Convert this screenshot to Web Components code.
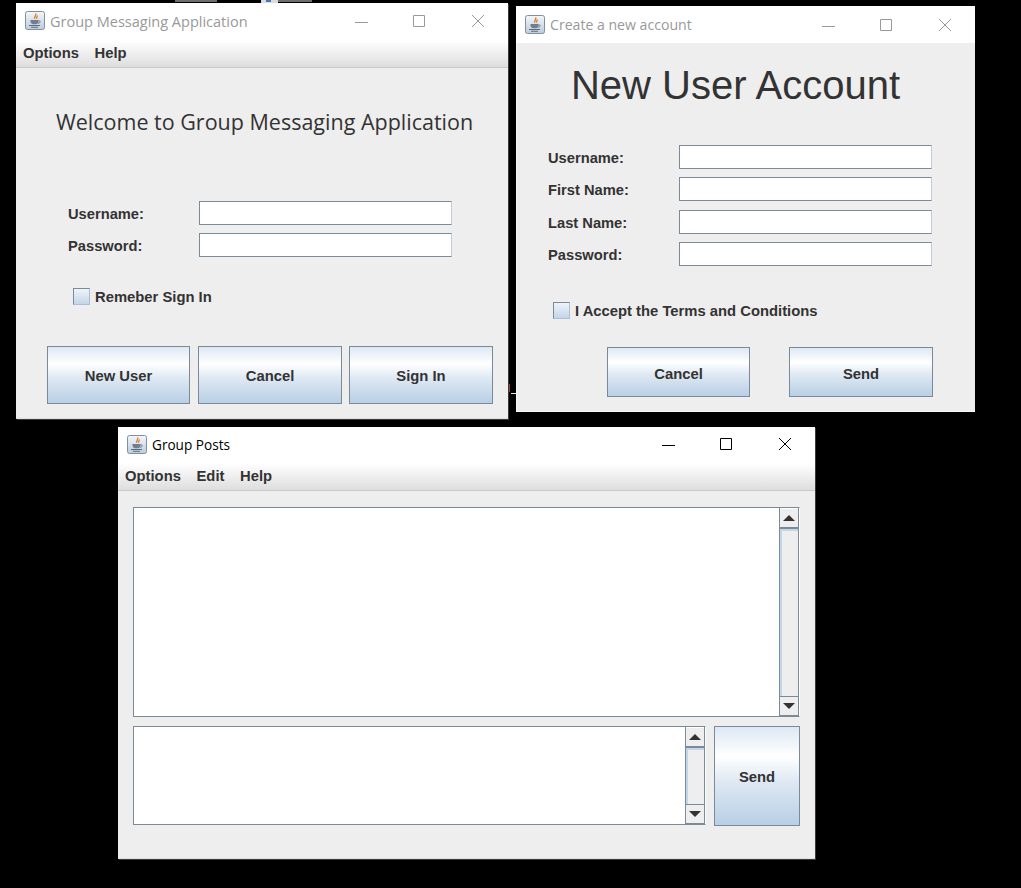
<!DOCTYPE html>
<html>
<head>
<meta charset="utf-8">
<title>Group Messaging Application</title>
<style>
html, body { margin: 0; height: 100%; background: #000; overflow: hidden; }
</style>
</head>
<body>
<desktop-scraps></desktop-scraps>

<app-window caption="Group Messaging Application" inactive style="left:16px;top:3px;width:492px;height:416px;--title-h:35px;--cap-size:14.500px;--cap-pad:1px;--edge:inset 0 -1px 0 #dfdfdf, 1px 1px 0 #3a3a3a">
    <menu-bar slot="menu"><span>Options</span><span>Help</span></menu-bar>
    <login-form></login-form>
</app-window>

<app-window caption="Create a new account" inactive style="left:516px;top:6px;width:459px;height:406px;--title-h:37px;--cap-size:14.100px;--cap-pad:0px;--edge:inset 1px -1px 0 #f8f8f8">
    <account-form></account-form>
</app-window>

<app-window caption="Group Posts" style="left:118px;top:427px;width:697px;height:432px;--title-h:34px;--cap-size:13.600px;--cap-pad:1px;--edge:inset 0 -1px 0 #dfdfdf, 1px 1px 0 #3a3a3a">
    <menu-bar slot="menu"><span>Options</span><span>Edit</span><span>Help</span></menu-bar>
    <posts-view></posts-view>
</app-window>

<script>
/* Scraps of whatever sits behind the three windows */
class DesktopScraps extends HTMLElement {
    constructor() {
        super();
        this.attachShadow({mode: "open"}).innerHTML = `
            <style>
            :host { display: block; }
            i { position: absolute; display: block; }
            </style>
            <i style="left:175px;top:0;width:42px;height:2px;background:#6e6e6e"></i>
            <i style="left:261px;top:0;width:17px;height:3px;background:#dcdcdc"></i>
            <i style="left:266px;top:0;width:5px;height:2px;background:#4a78b0"></i>
            <i style="left:278px;top:0;width:34px;height:2px;background:#6e6e6e"></i>
            <i style="left:508px;top:384px;width:1px;height:8px;background:#8fb4d8"></i>
            <i style="left:509px;top:384px;width:1px;height:8px;background:#a03c28"></i>
            <i style="left:511px;top:393px;width:5px;height:1px;background:#e8e8e8"></i>
        `;
    }
}
customElements.define("desktop-scraps", DesktopScraps);

/* The little Java coffee cup shown in every title bar */
const javaIcon = `
    <svg width="20" height="19" viewBox="0 0 20 19">
        <defs><linearGradient id="g" x1="0" y1="0" x2="0" y2="1">
            <stop offset="0" stop-color="#f4f7fa"/><stop offset="1" stop-color="#bccbdb"/>
        </linearGradient></defs>
        <rect x=".5" y=".5" width="19" height="18" rx="2" fill="url(#g)" stroke="#7f90a3"/>
        <path d="M10.500 2.500c1.500 1.800-1.800 3 -.8 5.200M12 4.500c.8 1.200-1 2-.3 3.200" fill="none" stroke="#e2812c" stroke-width="1.400"/>
        <path d="M5.500 9h8v1.200c0 2-1.500 3-2.500 3H8c-1 0-2.500-1-2.500-3z" fill="#6f7f90"/>
        <path d="M13.500 10h1.300c.8 0 .8 2-1.800 2.300" fill="none" stroke="#6f7f90"/>
        <path d="M4 14.500h11M6 16.300h7" stroke="#5d6d80" stroke-width="1.100"/>
    </svg>`;

const windowTemplate = document.createElement("template");
windowTemplate.innerHTML = `
    <style>
    :host {
        position: absolute;
        display: flex;
        flex-direction: column;
        box-sizing: border-box;
        background: #eeeeee;
        box-shadow: var(--edge);
        font-family: "Liberation Sans", Arial, sans-serif;
        color: #333333;
        --ctl: #000;
    }
    :host([inactive]) { --ctl: #999; }
    .title {
        display: flex;
        align-items: center;
        height: var(--title-h);
        flex: none;
        background: #fff;
        padding-left: 9px;
    }
    .title svg { flex: none; }
    .caption {
        flex: 1;
        margin-left: 5px;
        padding-top: var(--cap-pad);
        font: var(--cap-size) "Open Sans", sans-serif;
        color: #000;
        white-space: nowrap;
    }
    :host([inactive]) .caption { color: #999999; }
    .controls { display: flex; margin-right: 1px; }
    .controls svg { width: 58.500px; height: 14px; display: block; }
    .controls svg * { stroke: var(--ctl); fill: none; vector-effect: non-scaling-stroke; }
    .body { flex: 1; min-height: 0; display: flex; flex-direction: column; }
    </style>
    <div class="title">
        ${javaIcon}
        <span class="caption"></span>
        <div class="controls">
            <svg viewBox="0 0 58.500 14"><path d="M23 8.500h13"/></svg>
            <svg viewBox="0 0 58.500 14"><rect x="23.500" y="1.500" width="11" height="11"/></svg>
            <svg viewBox="0 0 58.500 14"><path d="M23 1l12 12M35 1l-12 12"/></svg>
        </div>
    </div>
    <slot name="menu"></slot>
    <div class="body"><slot></slot></div>
`;

/* A native looking window frame; its place on the desktop comes from its inline style */
class AppWindow extends HTMLElement {
    constructor() {
        super();
        this._shadowRoot = this.attachShadow({mode: "open"});
        this._shadowRoot.appendChild(windowTemplate.content.cloneNode(true));
        this._shadowRoot.querySelector(".caption").textContent = this.getAttribute("caption");
    }
}
customElements.define("app-window", AppWindow);

class MenuBar extends HTMLElement {
    constructor() {
        super();
        this.attachShadow({mode: "open"}).innerHTML = `
            <style>
            :host {
                display: flex;
                flex: none;
                box-sizing: border-box;
                height: 30px;
                gap: 15.600px;
                padding: 0 0 0 7px;
                align-items: center;
                font: bold 14.800px "Liberation Sans", sans-serif;
                color: #333;
                background: linear-gradient(#fff 0, #fff 8%, #dfdfdf 96%);
                border-bottom: 1px solid #c9c9c9;
            }
            </style>
            <slot></slot>
        `;
    }
}
customElements.define("menu-bar", MenuBar);

class JavaButton extends HTMLElement {
    constructor() {
        super();
        this.attachShadow({mode: "open"}).innerHTML = `
            <style>
            :host {
                display: flex;
                align-items: center;
                justify-content: center;
                box-sizing: border-box;
                border: 1px solid #7a8a99;
                padding-top: var(--text-drop, 1px);
                font: bold 14.800px "Liberation Sans", sans-serif;
                color: #333;
                background: linear-gradient(#dde8f3 0, #ffffff 30%, #dfe9f3 55%, #b8cfe5 100%);
            }
            </style>
            <slot></slot>
        `;
    }
}
customElements.define("java-button", JavaButton);

class FieldRow extends HTMLElement {
    constructor() {
        super();
        const root = this.attachShadow({mode: "open"});
        root.innerHTML = `
            <style>
            :host {
                display: flex;
                align-items: center;
                height: 24px;
                font: bold 14.700px "Liberation Sans", sans-serif;
                color: #333;
            }
            .label { width: 131px; flex: none; padding-top: 2px; }
            .input {
                width: 253px;
                height: 24px;
                box-sizing: border-box;
                background: #fff;
                border: 1px solid #7a8a99;
                border-right-color: #c5ccd3;
            }
            </style>
            <span class="label"></span>
            <div class="input"></div>
        `;
        root.querySelector(".label").textContent = this.getAttribute("label");
    }
}
customElements.define("field-row", FieldRow);

class JavaCheckbox extends HTMLElement {
    constructor() {
        super();
        this.attachShadow({mode: "open"}).innerHTML = `
            <style>
            :host {
                display: flex;
                align-items: center;
                gap: 5px;
                height: 17px;
                font: bold 14.800px "Liberation Sans", sans-serif;
                color: #333;
            }
            .box {
                width: 17px;
                height: 17px;
                box-sizing: border-box;
                border: 1px solid #7a8a99;
                border-right-color: #a9c0d8;
                border-bottom-color: #a9c0d8;
                background: linear-gradient(#eef3f8, #c3d5e8);
            }
            </style>
            <div class="box"></div>
            <span><slot></slot></span>
        `;
    }
}
customElements.define("java-checkbox", JavaCheckbox);

class LoginForm extends HTMLElement {
    constructor() {
        super();
        this.attachShadow({mode: "open"}).innerHTML = `
            <style>
            :host { display: flex; flex-direction: column; flex: 1; padding-top: 38px; }
            h1 {
                margin: 0;
                height: 32px;
                text-align: center;
                font: 400 21.500px/32px "Open Sans", sans-serif;
                color: #333;
                padding-left: 5px;
                white-space: nowrap;
            }
            .fields { display: flex; flex-direction: column; gap: 8px; margin: 63px 0 0 52px; }
            java-checkbox { margin: 31px 0 0 57px; }
            .buttons { display: flex; margin: 41px 0 0 31px; height: 58px; }
            .buttons java-button { width: 144px; margin-right: 7px; }
            .buttons java-button:first-child { width: 143px; margin-right: 8px; }
            </style>
            <h1>Welcome to Group Messaging Application</h1>
            <div class="fields">
                <field-row label="Username:"></field-row>
                <field-row label="Password:"></field-row>
            </div>
            <java-checkbox>Remeber Sign In</java-checkbox>
            <div class="buttons">
                <java-button>New User</java-button>
                <java-button>Cancel</java-button>
                <java-button>Sign In</java-button>
            </div>
        `;
    }
}
customElements.define("login-form", LoginForm);

class AccountForm extends HTMLElement {
    constructor() {
        super();
        this.attachShadow({mode: "open"}).innerHTML = `
            <style>
            :host { display: flex; flex-direction: column; flex: 1; padding-top: 18px; }
            h1 {
                margin: 0;
                font: 400 40px/48px "Liberation Sans", sans-serif;
                text-align: center;
                color: #333;
                padding-right: 20px;
                white-space: nowrap;
            }
            .fields { display: flex; flex-direction: column; gap: 8px; margin: 36px 0 0 32px; }
            .fields field-row:nth-child(3) { margin-top: 1px; }
            java-checkbox { margin: 36px 0 0 37px; }
            .buttons { display: flex; gap: 39px; margin: 28px 0 0 91px; height: 50px; --text-drop: 3px; }
            .buttons java-button { width: 143px; }
            .buttons java-button:last-child { width: 144px; }
            </style>
            <h1>New User Account</h1>
            <div class="fields">
                <field-row label="Username:"></field-row>
                <field-row label="First Name:"></field-row>
                <field-row label="Last Name:"></field-row>
                <field-row label="Password:"></field-row>
            </div>
            <java-checkbox>I Accept the Terms and Conditions</java-checkbox>
            <div class="buttons">
                <java-button>Cancel</java-button>
                <java-button>Send</java-button>
            </div>
        `;
    }
}
customElements.define("account-form", AccountForm);

/* White text pane with a Metal look vertical scrollbar on its right */
class ScrollPane extends HTMLElement {
    constructor() {
        super();
        this.attachShadow({mode: "open"}).innerHTML = `
            <style>
            :host {
                display: flex;
                box-sizing: border-box;
                background: #fff;
                border: 1px solid #7a8a99;
                border-right-color: #fff;
            }
            .text { flex: 1; }
            .bar {
                width: 20px;
                flex: none;
                display: flex;
                flex-direction: column;
                box-sizing: border-box;
                background: #eeeeee;
                border-left: 1px solid #7a8a99;
                border-right: 1px solid #7a8a99;
            }
            .arrow {
                height: 18px;
                flex: none;
                display: flex;
                align-items: center;
                justify-content: center;
                border-top: 1px solid #fff;
            }
            .arrow.up { border-bottom: 2px solid #7a8a99; }
            .arrow.down { border-top: 1px solid #7a8a99; border-bottom: 1px solid #7a8a99; }
            .track { flex: 1; border-top: 2px solid #c3d5e8; border-left: 2px solid #c3d5e8; }
            svg { display: block; }
            </style>
            <div class="text"></div>
            <div class="bar">
                <div class="arrow up"><svg width="12" height="6"><path d="M6 0l6 6H0z" fill="#333"/></svg></div>
                <div class="track"></div>
                <div class="arrow down"><svg width="12" height="6"><path d="M0 0h12L6 6z" fill="#333"/></svg></div>
            </div>
        `;
    }
}
customElements.define("scroll-pane", ScrollPane);

class PostsView extends HTMLElement {
    constructor() {
        super();
        this.attachShadow({mode: "open"}).innerHTML = `
            <style>
            :host { display: flex; flex-direction: column; flex: 1; padding: 16px 15px 0 15px; }
            .feed { height: 210px; width: 667px; }
            .compose { display: flex; margin-top: 9px; height: 100px; }
            .compose scroll-pane { width: 573px; height: 99px; }
            .compose java-button { width: 86px; margin-left: 8px; }
            </style>
            <scroll-pane class="feed"></scroll-pane>
            <div class="compose">
                <scroll-pane></scroll-pane>
                <java-button>Send</java-button>
            </div>
        `;
    }
}
customElements.define("posts-view", PostsView);
</script>
</body>
</html>
